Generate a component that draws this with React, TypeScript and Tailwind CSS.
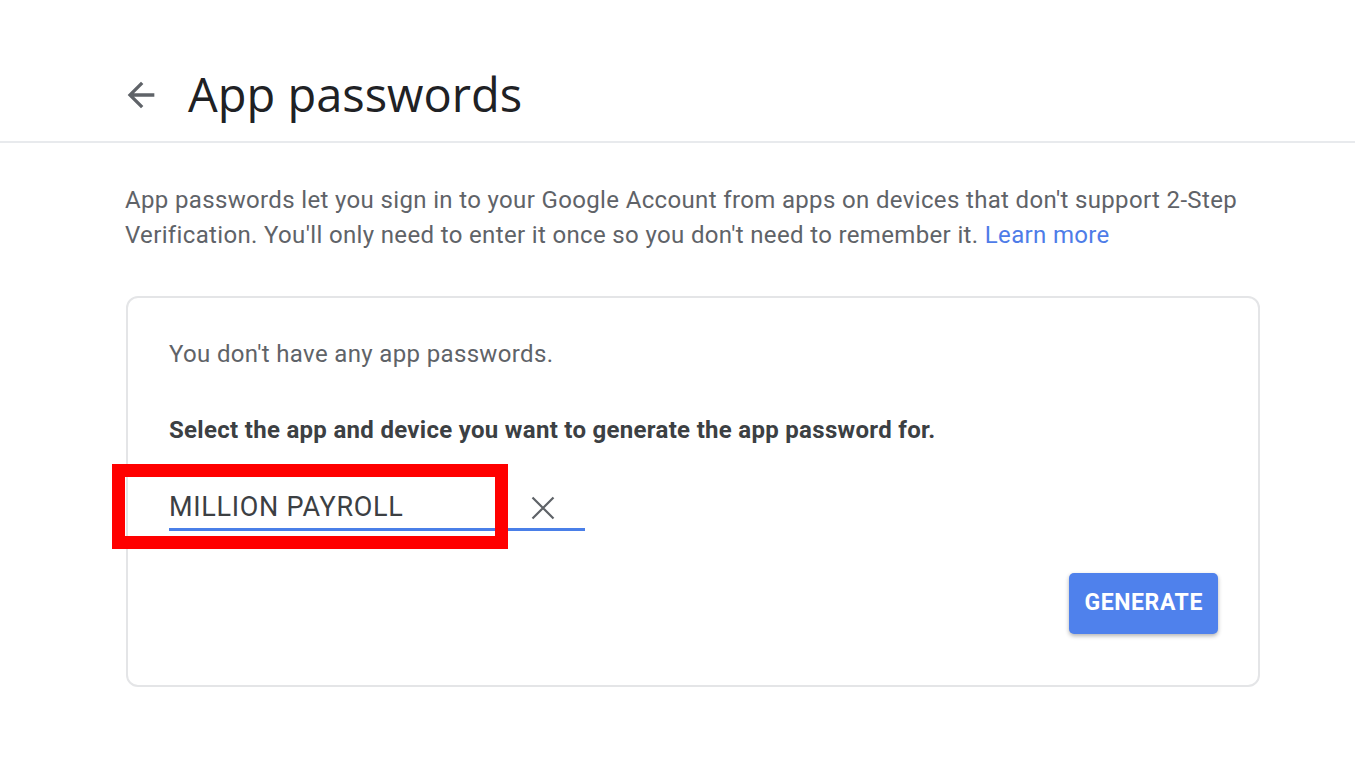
import React, { useState } from 'react';

const BackArrow: React.FC = () => (
  <svg width="40" height="40" viewBox="0 0 24 24" className="shrink-0" fill="#5f6368">
    <path d="M20 11H7.83l5.59-5.59L12 4l-8 8 8 8 1.41-1.41L7.83 13H20v-2z" />
  </svg>
);

const ClearIcon: React.FC = () => (
  <svg width="24" height="24" viewBox="0 0 24 24" fill="none" stroke="#5f6368" strokeWidth="2.2">
    <path d="M1.5 1.5L22.5 22.5M22.5 1.5L1.5 22.5" />
  </svg>
);

const App: React.FC = () => {
  const [appName, setAppName] = useState('MILLION PAYROLL');

  return (
    <div className="min-h-screen bg-white" style={{ fontFamily: 'Roboto, "Liberation Sans", sans-serif' }}>
      {/* header */}
      <header className="h-[143px] border-b-2 border-[#e8eaed] flex items-center pt-[48px] pl-[121px]">
        <BackArrow />
        <h1
          className="ml-[27px] text-[47px] leading-none text-[#202124]"
          style={{ fontFamily: '"Open Sans", Roboto, sans-serif' }}
        >
          App passwords
        </h1>
      </header>

      <main className="ml-[125px] w-[1135px]">
        <p className="mt-[40px] text-[24px] leading-[35px] tracking-[0.35px] text-[#5f6368]">
          App passwords let you sign in to your Google Account from apps on devices that don't support 2-Step
          Verification. You'll only need to enter it once so you don't need to remember it.{' '}
          <a href="#" className="text-[#4e7ce8]">Learn more</a>
        </p>

        <section className="mt-[43px] ml-px border-2 border-[#e4e5e7] rounded-[12px] pt-[41px] pb-[51px] pl-[41px] pr-[40px]">
          <p className="text-[24px] leading-[30px] tracking-[0.35px] text-[#5f6368]">You don't have any app passwords.</p>
          <p className="mt-[46px] text-[24px] leading-[30px] tracking-[0.3px] font-bold text-[#3c4043]">
            Select the app and device you want to generate the app password for.
          </p>

          <div className="relative mt-[42px] w-[416px]">
            <div className="flex items-center h-[44px] border-b-[3px] border-[#4a7fe8]">
              <input
                value={appName}
                onChange={(e) => setAppName(e.target.value)}
                className="flex-1 min-w-0 bg-transparent outline-none text-[27px] text-[#3c4043] tracking-[0.7px]"
              />
              <button className="mr-[30px] flex items-center">
                <ClearIcon />
              </button>
            </div>
            {/* annotation box */}
            <div className="absolute left-[-57px] top-[-23px] w-[396px] h-[85px] border-[13px] border-[#ff0000] pointer-events-none" />
          </div>

          <div className="flex justify-end mt-[42px]">
            <button className="h-[61px] px-[15px] rounded-[5px] bg-[#4f81ec] text-white text-[23px] font-bold tracking-[0.6px] shadow-[0_2px_4px_rgba(0,0,0,0.3)]">
              GENERATE
            </button>
          </div>
        </section>
      </main>
    </div>
  );
};

export default App;
